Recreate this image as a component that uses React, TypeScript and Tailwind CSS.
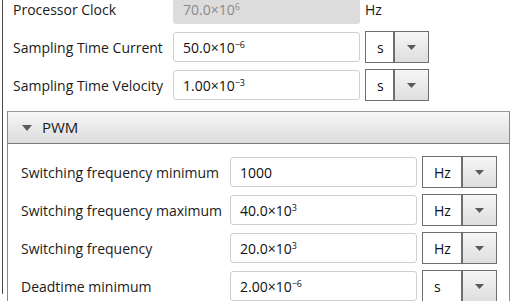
import { ReactNode } from "react";

type Row = { label: string; value: ReactNode; unit: string };

const Num = ({ m, e }: { m: string; e: string }) => (
  <span>
    {m}×10<sup className="relative -top-[5px] text-[9px]">{e}</sup>
  </span>
);

const Field = ({ children, disabled }: { children: ReactNode; disabled?: boolean }) => (
  <div
    className={
      disabled
        ? "flex h-[30px] w-[187px] items-center rounded-[3px] bg-[#dcdcdc] px-[10px] text-[#8a8a8a]"
        : "flex h-[30px] w-[187px] items-center rounded-[3px] border border-[#cfcfcf] bg-white px-[9px] text-[#111]"
    }
  >
    {children}
  </div>
);

const UnitBox = ({ unit, wide }: { unit: string; wide?: boolean }) => (
  <div className="flex h-[32px] border border-[#6e6e6e] bg-white">
    <div
      className={`flex items-center border-r-2 border-[#6e6e6e] px-[11px] text-[#111] ${wide ? "w-[40px]" : "w-[29px]"}`}
    >
      {unit}
    </div>
    <div className="flex w-[33px] items-center justify-center bg-gradient-to-b from-[#f6f6f6] to-[#dedede]">
      <svg width="9" height="5" viewBox="0 0 9 5">
        <path d="M0 0h9L4.5 5z" fill="#5a5a5a" />
      </svg>
    </div>
  </div>
);

const top: Row[] = [
  { label: "Sampling Time Current", value: <Num m="50.0" e="−6" />, unit: "s" },
  { label: "Sampling Time Velocity", value: <Num m="1.00" e="−3" />, unit: "s" },
];

const pwm: Row[] = [
  { label: "Switching frequency minimum", value: "1000", unit: "Hz" },
  { label: "Switching frequency maximum", value: <Num m="40.0" e="3" />, unit: "Hz" },
  { label: "Switching frequency", value: <Num m="20.0" e="3" />, unit: "Hz" },
  { label: "Deadtime minimum", value: <Num m="2.00" e="−6" />, unit: "s" },
];

export default function App() {
  return (
    <div
      className="h-[301px] w-[517px] overflow-hidden bg-white text-[14px] text-[#1b1b1b]"
      style={{ fontFamily: "'Open Sans', 'Noto Sans', sans-serif" }}
    >
      <div className="ml-[2px] h-full border-l border-[#4a4a4a]">
        <div className="-mt-[7px] flex flex-col gap-[6px] pl-[10px]">
          <div className="flex h-[32px] items-center">
            <span className="w-[160px]">Processor Clock</span>
            <Field disabled>
              <Num m="70.0" e="6" />
            </Field>
            <span className="ml-[5px]">Hz</span>
          </div>
          {top.map((r) => (
            <div key={r.label} className="flex h-[32px] items-center">
              <span className="w-[160px]">{r.label}</span>
              <Field>{r.value}</Field>
              <div className="ml-[5px]">
                <UnitBox unit={r.unit} />
              </div>
            </div>
          ))}
        </div>

        <div className="mt-[10px] ml-[4px] w-[503px] border-x border-[#8a8a8a]">
          <div className="flex h-[33px] items-center gap-[10px] border-y border-t-[#9a9a9a] border-b-[#7a7a7a] bg-gradient-to-b from-[#f7f7f7] to-[#dcdcdc] pl-[14px] text-[15px]">
            <svg width="10" height="6" viewBox="0 0 10 6">
              <path d="M0 0h10L5 6z" fill="#5a5a5a" />
            </svg>
            <span>PWM</span>
          </div>
          <div className="flex flex-col gap-[6px] pt-[12px] pb-[20px] pl-[13px]">
            {pwm.map((r) => (
              <div key={r.label} className="flex h-[32px] items-center">
                <span className="w-[209px]">{r.label}</span>
                <Field>{r.value}</Field>
                <div className="ml-[5px]">
                  <UnitBox unit={r.unit} wide />
                </div>
              </div>
            ))}
          </div>
        </div>
      </div>
    </div>
  );
}
